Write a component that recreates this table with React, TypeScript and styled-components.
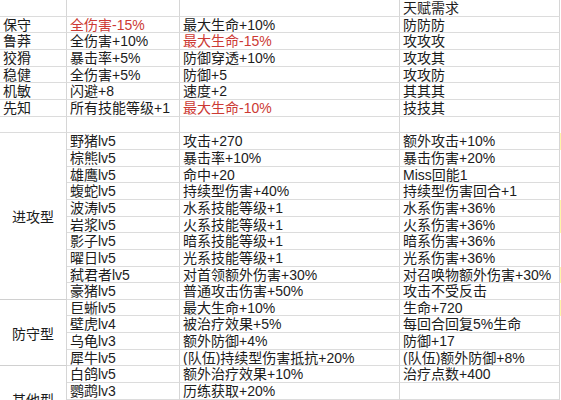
import React from "react";
import styled, { createGlobalStyle } from "styled-components";

const GlobalStyle = createGlobalStyle`
  html, body {
    margin: 0;
    padding: 0;
    background: #fff;
    overflow: hidden;
  }
  body {
    width: 561px;
    height: 400px;
  }
`;

const ROW_H = 400 / 24;

const Sheet = styled.div`
  display: grid;
  grid-template-columns: 67px 113px 220px 160px 1px;
  grid-auto-rows: ${ROW_H}px;
  width: 561px;
  font-family: "Liberation Sans", "Noto Sans CJK SC", sans-serif;
  font-size: 14px;
  color: #1c1c1c;
`;

const Cell = styled.div<{ $red?: boolean }>`
  box-sizing: border-box;
  border-right: 1px solid #d6d6d6;
  border-bottom: 1px solid #dcdcdc;
  padding: 1px 0 0 3px;
  line-height: ${ROW_H - 1}px;
  white-space: nowrap;
  overflow: hidden;
  color: ${(p) => (p.$red ? "#cc3a34" : "#1c1c1c")};
`;

const GroupCell = styled.div<{ $span: number }>`
  box-sizing: border-box;
  grid-row: span ${(p) => p.$span};
  border-right: 1px solid #d6d6d6;
  border-bottom: 1px solid #d0d0d0;
  display: flex;
  align-items: center;
  justify-content: center;
  white-space: nowrap;
`;

const Edge = styled.div<{ $mark?: boolean }>`
  background: ${(p) => (p.$mark ? "#fff6a8" : "#fff")};
`;

type Row = { name?: string; a: string; b: string; c: string; redA?: boolean; redB?: boolean; mark?: boolean };

const topRows: Row[] = [
  { name: "", a: "", b: "", c: "天赋需求" },
  { name: "保守", a: "全伤害-15%", b: "最大生命+10%", c: "防防防", redA: true },
  { name: "鲁莽", a: "全伤害+10%", b: "最大生命-15%", c: "攻攻攻", redB: true },
  { name: "狡猾", a: "暴击率+5%", b: "防御穿透+10%", c: "攻攻其" },
  { name: "稳健", a: "全伤害+5%", b: "防御+5", c: "攻攻防" },
  { name: "机敏", a: "闪避+8", b: "速度+2", c: "其其其" },
  { name: "先知", a: "所有技能等级+1", b: "最大生命-10%", c: "技技其", redB: true },
  { name: "", a: "", b: "", c: "" },
];

const groups: { label: string; span: number; rows: Row[] }[] = [
  {
    label: "进攻型",
    span: 10,
    rows: [
      { a: "野猪lv5", b: "攻击+270", c: "额外攻击+10%", mark: true },
      { a: "棕熊lv5", b: "暴击率+10%", c: "暴击伤害+20%" },
      { a: "雄鹰lv5", b: "命中+20", c: "Miss回能1" },
      { a: "蝮蛇lv5", b: "持续型伤害+40%", c: "持续型伤害回合+1" },
      { a: "波涛lv5", b: "水系技能等级+1", c: "水系伤害+36%", mark: true },
      { a: "岩浆lv5", b: "火系技能等级+1", c: "火系伤害+36%", mark: true },
      { a: "影子lv5", b: "暗系技能等级+1", c: "暗系伤害+36%" },
      { a: "曜日lv5", b: "光系技能等级+1", c: "光系伤害+36%" },
      { a: "弑君者lv5", b: "对首领额外伤害+30%", c: "对召唤物额外伤害+30%", mark: true },
      { a: "豪猪lv5", b: "普通攻击伤害+50%", c: "攻击不受反击" },
    ],
  },
  {
    label: "防守型",
    span: 4,
    rows: [
      { a: "巨蜥lv5", b: "最大生命+10%", c: "生命+720", mark: true },
      { a: "壁虎lv4", b: "被治疗效果+5%", c: "每回合回复5%生命" },
      { a: "乌龟lv3", b: "额外防御+4%", c: "防御+17" },
      { a: "犀牛lv5", b: "(队伍)持续型伤害抵抗+20%", c: "(队伍)额外防御+8%" },
    ],
  },
  {
    label: "其他型",
    span: 4,
    rows: [
      { a: "白鸽lv5", b: "额外治疗效果+10%", c: "治疗点数+400" },
      { a: "鹦鹉lv3", b: "历练获取+20%", c: "" },
      { a: "", b: "", c: "" },
      { a: "", b: "", c: "" },
    ],
  },
];

export default function App() {
  return (
    <>
      <GlobalStyle />
      <Sheet>
        {topRows.map((r, i) => (
          <React.Fragment key={`t${i}`}>
            <Cell>{r.name}</Cell>
            <Cell $red={r.redA}>{r.a}</Cell>
            <Cell $red={r.redB}>{r.b}</Cell>
            <Cell>{r.c}</Cell>
            <Edge />
          </React.Fragment>
        ))}
        {groups.map((g) =>
          g.rows.map((r, i) => (
            <React.Fragment key={`${g.label}${i}`}>
              {i === 0 && <GroupCell $span={g.span}>{g.label}</GroupCell>}
              <Cell>{r.a}</Cell>
              <Cell>{r.b}</Cell>
              <Cell>{r.c}</Cell>
              <Edge $mark={r.mark} />
            </React.Fragment>
          ))
        )}
      </Sheet>
    </>
  );
}
